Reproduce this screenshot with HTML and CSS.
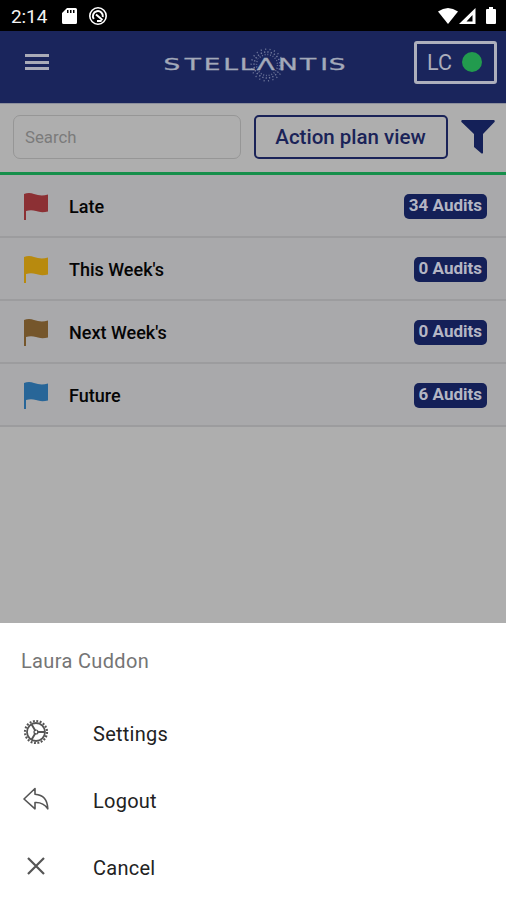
FILE: index.html
```html
<!DOCTYPE html>
<html lang="en">
<head>
<meta charset="utf-8">
<title>Audits</title>
<link rel="stylesheet" href="styles.css">
</head>
<body>
<div class="phone">
  <div class="status">
    <span class="clock">2:14</span>
    <svg class="sd" viewBox="0 0 15 18"><path fill="#fff" fill-rule="evenodd" d="M5 1h8.500q1.500 0 1.500 1.500v13q0 1.500-1.500 1.500h-12Q0 17 0 15.500V6zM5 3v3h1.500V3zM8 3v3h1.500V3zM11 3v3h1.500V3z"/></svg>
    <svg class="sync" viewBox="0 0 20 20" fill="none" stroke="#fff"><circle cx="10" cy="10" r="8.200" stroke-width="1.600"/><path stroke-width="2" d="M5.800 13A5 5 0 1 1 14.800 11M9 15h4.500M8 8.500l6.500 5.500"/></svg>
    <svg class="signals" viewBox="0 0 60 18" fill="#fff"><path d="M0 4.500Q10 -2.500 20 4.500L10 17z"/><path fill-rule="evenodd" d="M37.500 1v16H21zM34.500 8v6.500h-6z"/><path d="M49 2h2V0h4v2h2q1 0 1 1v13q0 1-1 1h-8q-1 0-1-1V3q0-1 1-1z"/></svg>
  </div>
  <header class="header">
    <div class="menu"><i></i><i></i><i></i></div>
    <svg class="logo" viewBox="0 0 190 40">
      <g fill="none" stroke="#8f96b3" stroke-width="1.500">
        <circle cx="107" cy="20" r="10.500" stroke-dasharray="1 1.750" opacity=".65"/>
        <circle cx="107" cy="20" r="13" stroke-dasharray="1.300 2.100" opacity=".75"/>
        <circle cx="107" cy="20" r="15.800" stroke-dasharray="1.200 3.300" opacity=".65"/>
      </g>
      <path class="gap" d="M98 14h18v11H98z"/>
      <text class="brand" transform="translate(0 25) scale(1.650 1)" x="2.100 15 26.500 38.300 48.400 58.700 71.500 84.800 97.200 102.300">STELLΛNTIS</text>
    </svg>
    <div class="user"><span>LC</span><b></b></div>
  </header>
  <div class="toolbar">
    <div class="search">Search</div>
    <div class="plan">Action plan view</div>
    <svg class="filter" viewBox="0 0 34 34"><path fill="#142058" d="M1 0h32q1.500 1 0 2.500L22 14v19q-1 1-2 0l-7-6V14L1 2.500Q-.5 1 1 0z"/></svg>
  </div>
  <main class="list">
    <div class="row"><svg class="flag late" viewBox="0 0 24 27"><path d="M0 1q5-2 10 0 7 2.500 14 .5v17q-7 1.500-12-.5-5-1.500-10 0v9H0z"/></svg><span>Late</span><em>34 Audits</em></div>
    <div class="row"><svg class="flag week" viewBox="0 0 24 27"><path d="M0 1q5-2 10 0 7 2.500 14 .5v17q-7 1.500-12-.5-5-1.500-10 0v9H0z"/></svg><span>This Week's</span><em>0 Audits</em></div>
    <div class="row"><svg class="flag next" viewBox="0 0 24 27"><path d="M0 1q5-2 10 0 7 2.500 14 .5v17q-7 1.500-12-.5-5-1.500-10 0v9H0z"/></svg><span>Next Week's</span><em>0 Audits</em></div>
    <div class="row"><svg class="flag future" viewBox="0 0 24 27"><path d="M0 1q5-2 10 0 7 2.500 14 .5v17q-7 1.500-12-.5-5-1.500-10 0v9H0z"/></svg><span>Future</span><em>6 Audits</em></div>
  </main>
  <section class="sheet">
    <div class="name">Laura Cuddon</div>
    <div class="item"><svg viewBox="0 0 26 26" fill="none" stroke="#555"><circle cx="13" cy="13" r="11" stroke-width="2.200" stroke-dasharray="1.900 1.556"/><circle cx="13" cy="13" r="9" stroke-width="1.800"/><circle cx="13" cy="13" r="2" stroke-width="1.200"/><path stroke-width="1.900" d="M14 13h8M12.500 12L8.500 5.200M12.500 14l-4 6.800"/></svg><span>Settings</span></div>
    <div class="item"><svg viewBox="0 0 26 26" fill="none" stroke="#555" stroke-width="1.600" stroke-linejoin="round"><path d="M12 2.500L1 13l11 9.800v-6.300c6-.4 9.500 1.500 12.800 6.300C24.500 13.500 20.500 8.800 12 8.200z"/></svg><span>Logout</span></div>
    <div class="item"><svg viewBox="0 0 26 26" fill="none" stroke="#555" stroke-width="2.200"><path d="M5 5l16 16M21 5L5 21"/></svg><span>Cancel</span></div>
  </section>
</div>
</body>
</html>
```
FILE: styles.css
```css
* { box-sizing: border-box; }
body { margin: 0; font-family: Roboto, "Liberation Sans", sans-serif; }
.phone { width: 506px; height: 900px; display: flex; flex-direction: column; background: #aeaeae; overflow: hidden; }
.status { height: 31px; flex: none; background: #000; color: #f4f4f4; display: flex; align-items: center; padding: 1px 8px 0 11px; }
.clock { width: 51px; font-size: 19px; font-weight: 400; letter-spacing: -.1px; }
.sd { width: 15px; height: 18px; }
.sync { width: 20px; height: 20px; margin-left: 11px; }
.signals { width: 60px; height: 18px; margin-left: auto; }
.header { height: 72px; flex: none; background: #1a255c; display: flex; align-items: center; padding: 0 9px 10px 25px; }
.menu { width: 24px; display: flex; flex-direction: column; gap: 3.500px; }
.menu i { height: 3px; background: #a9abb8; }
.logo { width: 190px; height: 40px; margin: 6px 0 0 111px; }
.brand { font-family: "DejaVu Sans", sans-serif; font-size: 16px; font-weight: 400; fill: #a3a9b9; stroke: #a3a9b9; stroke-width: .3px; }
.gap { fill: #1a255c; }
.user { width: 83px; height: 43px; margin-left: auto; border: 3px solid #adafbc; border-radius: 3px; color: #abadbb; display: flex; align-items: center; justify-content: space-between; padding: 0 12px 0 10px; font-size: 21.500px; }
.user b { width: 20px; height: 20px; border-radius: 50%; background: #229b4e; }
.toolbar { height: 72px; flex: none; display: flex; align-items: center; padding: 0 11px 2px 13px; border-top: 1px solid #8c8f9c; border-bottom: 3px solid #168f4b; background: #aeaeae; }
.search { width: 228px; height: 44px; border: 1.500px solid #969696; border-radius: 7px; padding-left: 11px; font-size: 16.800px; line-height: 42px; color: #7b7b7b; }
.plan { width: 194px; height: 44px; margin-left: 12.500px; border: 2px solid #1a2358; border-radius: 5px; color: #1a2358; font-size: 20.500px; font-weight: 500; text-align: center; line-height: 41px; }
.filter { width: 34px; height: 34px; margin-left: auto; }
.list { background: #a9a9ab; flex: none; }
.row { height: 63px; display: flex; align-items: center; padding: 1px 19px 0 24px; border-bottom: 2px solid #9c9c9e; font-size: 18px; font-weight: 500; color: #050505; }
.flag { width: 24px; height: 27px; margin-right: 21px; }
.late { fill: #8c3034; }
.week { fill: #b88a0e; }
.next { fill: #75562b; }
.future { fill: #286698; }
.row em { margin-left: auto; height: 25px; border-radius: 5px; background: #142058; color: #b4b6c4; font-style: normal; font-size: 17px; font-weight: 700; line-height: 23px; padding: 0 5px; }
.sheet { height: 277px; margin-top: auto; flex: none; background: #fff; padding: 4px 21px 0; }
.name { height: 73px; line-height: 69px; font-size: 20px; color: #757575; letter-spacing: .35px; }
.item { height: 67px; display: flex; align-items: center; color: #222; font-size: 20px; letter-spacing: .25px; }
.item svg { width: 26px; height: 26px; margin: 0 44px 4px 2px; }
```
